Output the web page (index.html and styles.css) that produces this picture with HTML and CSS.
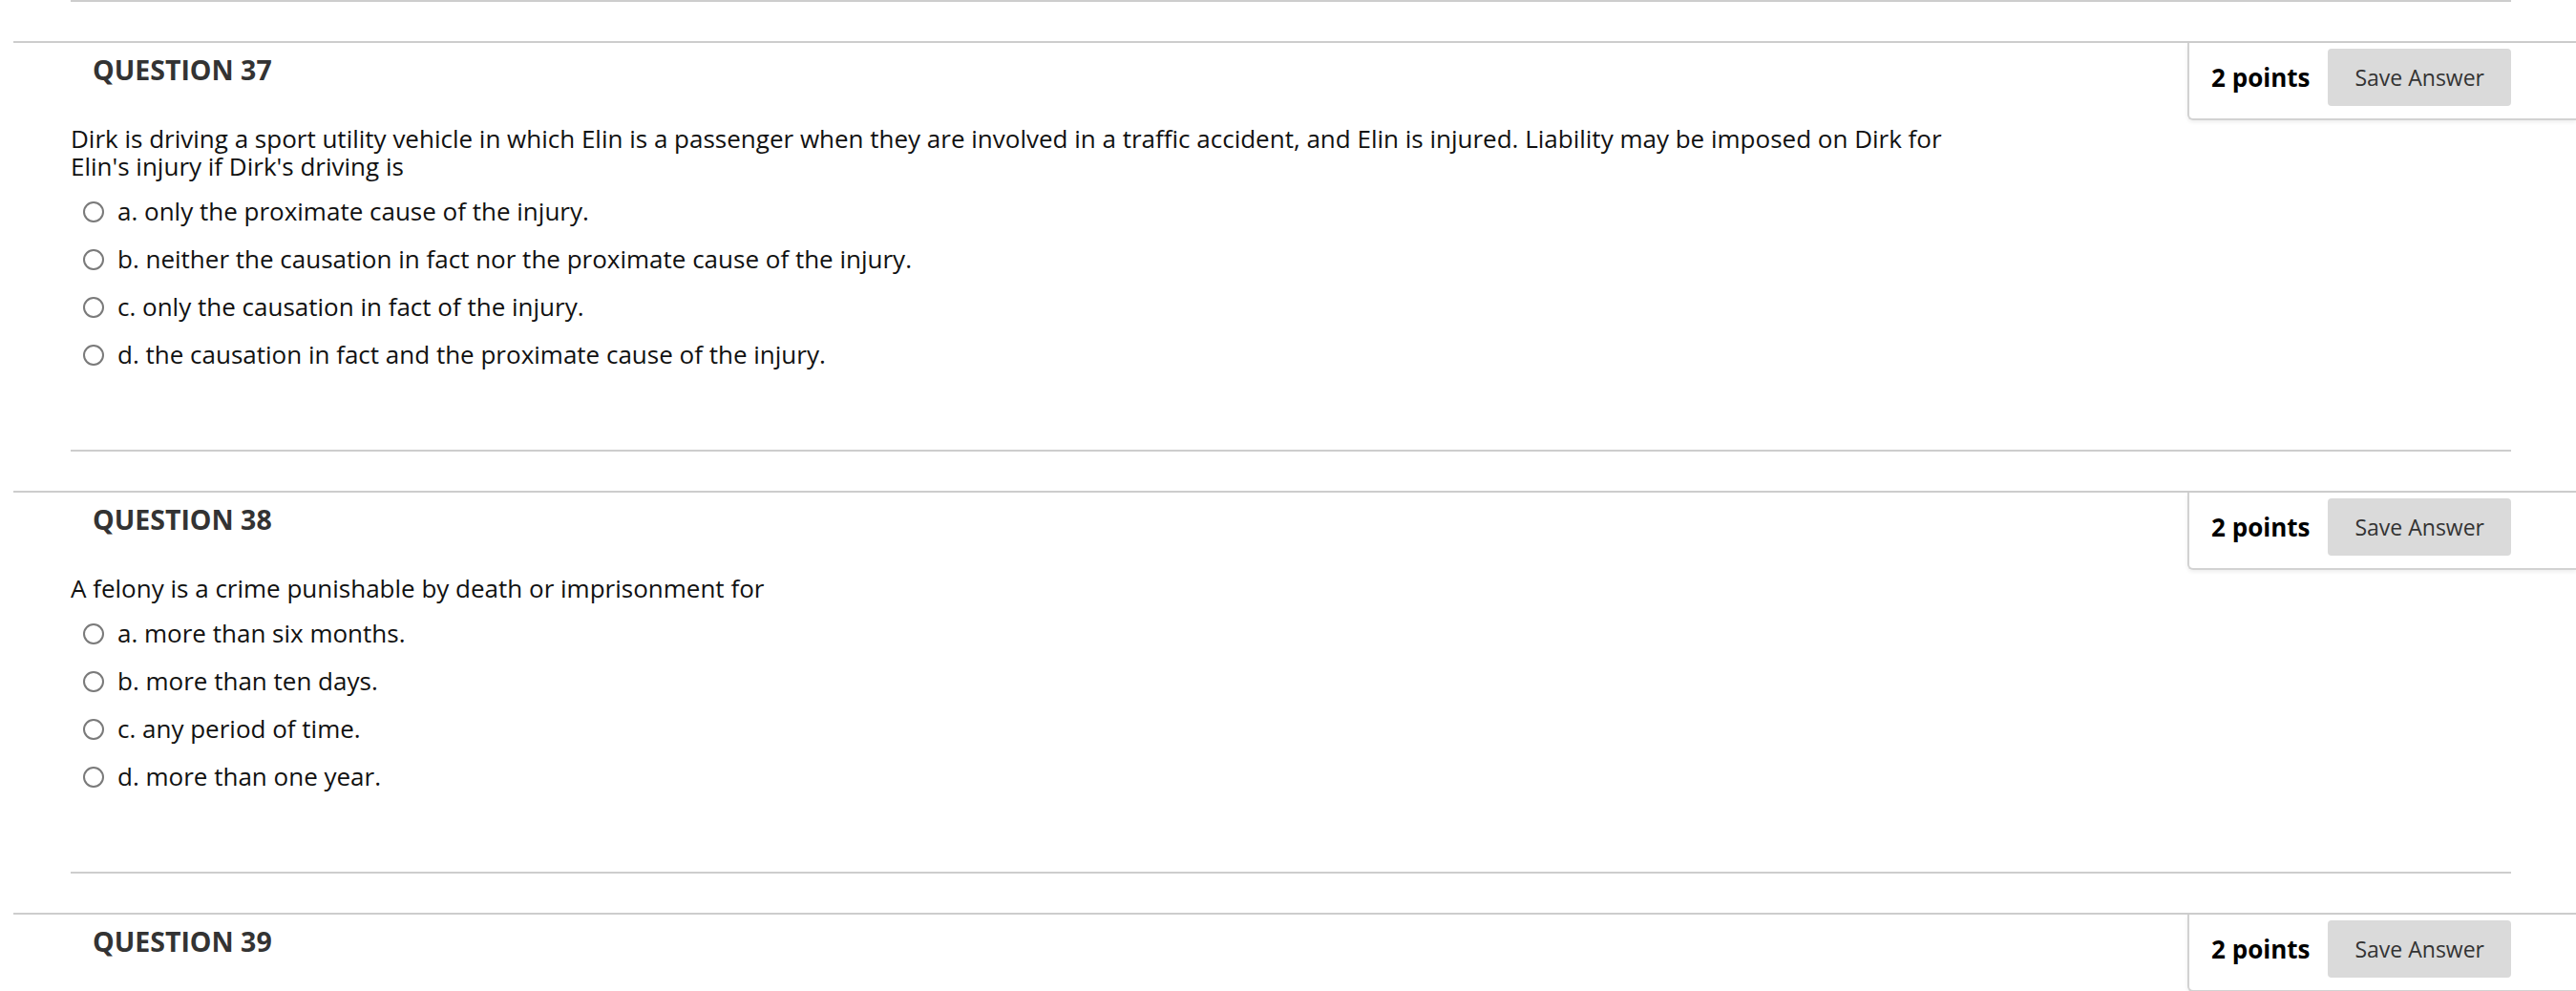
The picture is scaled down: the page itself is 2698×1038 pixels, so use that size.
FILE: index.html
```html
<!DOCTYPE html>
<html lang="en">
<head>
<meta charset="utf-8">
<title>Test</title>
<link rel="stylesheet" href="styles.css">
</head>
<body>
<div class="page">
  <div class="divider top"></div>

  <section class="question">
    <header class="q-header">
      <h3 class="q-title">QUESTION 37</h3>
      <div class="points"><span class="pts">2 points</span><button class="save" type="button">Save Answer</button></div>
    </header>
    <div class="q-body">
      <p class="q-text">Dirk is driving a sport utility vehicle in which Elin is a passenger when they are involved in a traffic accident, and Elin is injured. Liability may be imposed on Dirk for Elin's injury if Dirk's driving is</p>
      <ul class="options">
        <li class="option"><span class="radio"></span><span>a. only the proximate cause of the injury.</span></li>
        <li class="option"><span class="radio"></span><span>b. neither the causation in fact nor the proximate cause of the injury.</span></li>
        <li class="option"><span class="radio"></span><span>c. only the causation in fact of the injury.</span></li>
        <li class="option"><span class="radio"></span><span>d. the causation in fact and the proximate cause of the injury.</span></li>
      </ul>
    </div>
    <div class="divider"></div>
  </section>

  <section class="question">
    <header class="q-header">
      <h3 class="q-title">QUESTION 38</h3>
      <div class="points"><span class="pts">2 points</span><button class="save" type="button">Save Answer</button></div>
    </header>
    <div class="q-body">
      <p class="q-text">A felony is a crime punishable by death or imprisonment for</p>
      <ul class="options">
        <li class="option"><span class="radio"></span><span>a. more than six months.</span></li>
        <li class="option"><span class="radio"></span><span>b. more than ten days.</span></li>
        <li class="option"><span class="radio"></span><span>c. any period of time.</span></li>
        <li class="option"><span class="radio"></span><span>d. more than one year.</span></li>
      </ul>
    </div>
    <div class="divider"></div>
  </section>

  <section class="question">
    <header class="q-header">
      <h3 class="q-title">QUESTION 39</h3>
      <div class="points"><span class="pts">2 points</span><button class="save" type="button">Save Answer</button></div>
    </header>
  </section>
</div>
</body>
</html>
```

FILE: styles.css
```css
html, body {
  margin: 0;
  padding: 0;
  overflow: hidden;
  background: #fff;
}

body {
  font-family: "Open Sans", "Noto Sans", sans-serif;
  color: #111;
}

.divider {
  height: 0;
  border-top: 2px solid #cdcdcd;
  margin: 0 68px 0 74px;
}

.question {
  margin: 41px 0 0 14px;
  border-top: 2px solid #cdcdcd;
}

.question .divider {
  margin: 85px 68px 0 60px;
}

.q-header {
  display: flex;
  justify-content: space-between;
  align-items: flex-start;
}

.q-title {
  margin: 11px 0 0 83px;
  font-size: 28.5px;
  line-height: 34px;
  font-weight: 700;
  color: #333;
}

.points {
  display: flex;
  align-items: center;
  gap: 19px;
  padding: 6px 68px 13px 23px;
  border-left: 2px solid #d2d2d2;
  border-bottom: 2px solid #d2d2d2;
  border-bottom-left-radius: 6px;
  box-shadow: 0 2px 4px rgba(0, 0, 0, 0.07);
  background: #fff;
}

.pts {
  font-size: 26px;
  line-height: 32px;
  font-weight: 700;
  color: #000;
}

.save {
  font-family: "Open Sans", "Noto Sans", sans-serif;
  font-size: 23px;
  color: #333;
  background: #dadada;
  border: none;
  border-radius: 4px;
  height: 60px;
  padding: 0 28px;
  margin: 0;
}

.q-body {
  margin: 5px 0 0 60px;
}

.q-text {
  margin: 0;
  font-size: 26px;
  line-height: 29px;
  width: 2000px;
}

.options {
  list-style: none;
  margin: 18px 0 0;
  padding: 0 0 0 13px;
  display: flex;
  flex-direction: column;
  gap: 21px;
}

.option {
  display: flex;
  align-items: center;
  gap: 14px;
  font-size: 26px;
  line-height: 29px;
}

.radio {
  flex: none;
  width: 22px;
  height: 22px;
  box-sizing: border-box;
  border: 2px solid #7a7a7a;
  border-radius: 50%;
  background: #fff;
}
```
